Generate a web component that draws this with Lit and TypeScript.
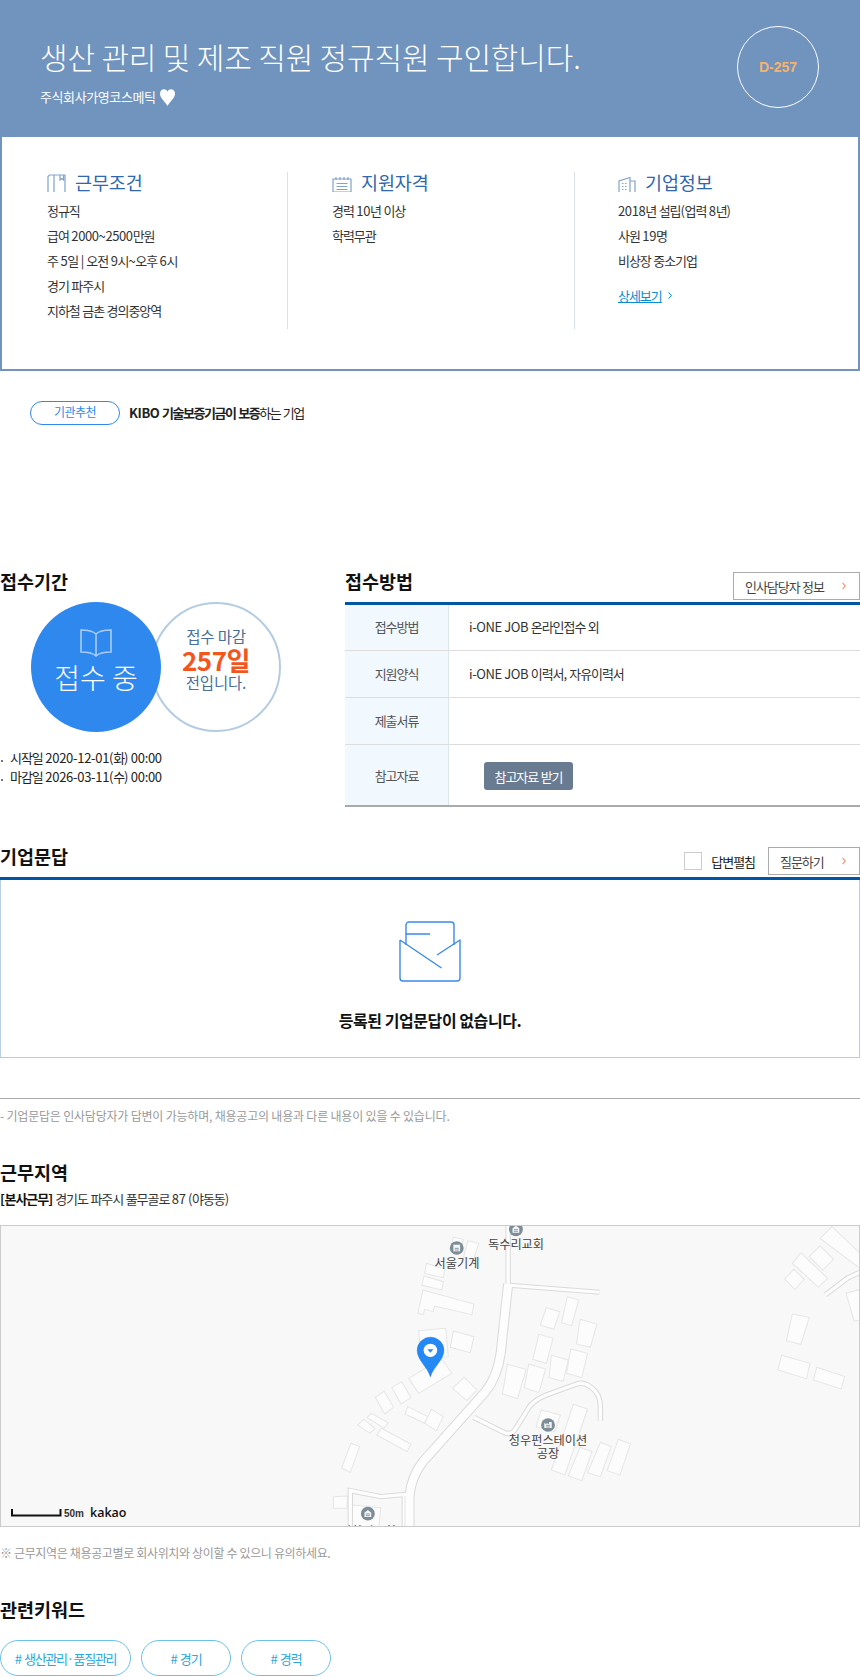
import { LitElement, html, css, svg } from "lit";
import { customElement } from "lit/decorators.js";

const chev = html`<svg class="chev" width="4" height="8" viewBox="0 0 4 8"><path d="M.5.8l2.8 3.2L.5 7.200" fill="none" stroke="#f0662f" stroke-width="1"/></svg>`;

/* Hangul runs are set tighter than digits and Latin, as in the reference face */
const k = (text: string) =>
  html`<span>${text.split(/([\uAC00-\uD7A3]+)/).map((part, i) => (i % 2 ? html`<span class="h">${part}</span>` : part))}</span>`;

const buildings = [
  "1450,85 1485,50 1568,130 1568,175", "1368,160 1393,128 1472,205 1445,232", "1418,140 1450,108 1490,148 1458,180",
  "1345,207 1372,178 1403,208 1375,238", "1527,250 1568,238 1568,330 1550,333", "1368,312 1418,322 1393,403 1350,392",
  "1336,436 1420,460 1410,506 1325,480", "1440,472 1523,500 1512,537 1430,510",
  "640,293 680,305 662,358 622,345", "702,260 736,270 715,347 685,338", "740,328 790,342 770,412 729,402",
  "618,373 660,385 640,460 600,448", "712,417 762,430 745,503 700,490", "655,436 705,450 690,514 648,503",
  "588,462 638,477 618,548 575,533", "525,463 580,478 555,566 510,552", "720,583 762,597 695,795 655,780",
  "625,600 682,615 665,665 610,650", "740,712 775,725 745,812 705,797", "800,697 832,710 800,800 762,788", "853,688 889,702 858,795 820,782",
  "365,82 395,88 385,125 355,118", "408,92 440,100 425,150 395,142",
  "285,160 340,178 335,203 280,190", "278,198 336,215 330,240 272,226", "275,240 426,282 420,314 310,288 305,305 280,298 276,314 260,310",
  "262,362 342,355 350,440 270,450", "365,363 426,380 415,428 356,412", "233,505 330,445 360,490 262,550",
  "362,535 397,502 435,540 405,572", "183,532 212,515 240,563 210,582", "134,562 160,544 188,592 162,612",
  "230,590 290,620 280,640 222,612", "300,598 335,620 315,662 280,640", "110,622 122,610 172,638 160,655",
  "82,645 100,628 133,655 118,670", "152,655 240,703 228,725 138,675", "62,700 88,710 60,787 34,775", "10,860 52,858 50,895 10,895", "65,885 150,893 145,950 62,950",
];
const roads: [string, number][] = [
  ["M527 40L527 225", 10],
  ["M530 226L797 247", 9],
  ["M527 222L505 430Q495 500 460 545L275 755Q240 800 235 860L235 960", 24],
  ["M425 622L510 665Q535 680 550 655L590 590Q605 570 640 555L730 522Q750 515 770 530Q800 550 800 590L800 632", 10],
  ["M225 853L150 860L60 842L60 960", 10],
  ["M218 855L218 960", 6],
  ["M1465 255L1530 205L1575 183", 10],
];

function poi(cx: number, cy: number, kind: string) {
  return svg`<circle cx=${cx} cy=${cy} r="20.5" fill="#7c8d98"/>
    <path d=${kind === "church"
      ? `M${cx - 10} ${cy + 10}V${cy - 3}L${cx} ${cy - 11}L${cx + 10} ${cy - 3}V${cy + 10}Z`
      : kind === "factory"
        ? `M${cx - 11} ${cy + 9}V${cy - 6}L${cx - 4} ${cy - 2}V${cy - 6}L${cx + 3} ${cy - 2}V${cy - 9}H${cx + 11}V${cy + 9}Z`
        : `M${cx - 10} ${cy + 10}V${cy - 10}H${cx + 10}V${cy + 10}Z`}
      fill="#fff" opacity="0.92"/>
    <path d=${`M${cx - 6} ${cy + 1}H${cx + 6}M${cx - 6} ${cy + 6}H${cx + 6}`} stroke="#7c8d98" stroke-width="2.5" fill="none"/>`;
}

@customElement("app-root")
export class AppRoot extends LitElement {
  static styles = css`
    :host { display: block; width: 860px; height: 1677px; overflow: hidden; background: #fff; color: #222;
      font-family: "Noto Sans CJK KR", "Noto Sans", sans-serif; font-size: 13px; letter-spacing: -0.4px; }
    * { box-sizing: border-box; }
    .h { letter-spacing: var(--hs, -1.05px); }
    .head { height: 137px; background: #7094bd; color: #fff; display: flex; justify-content: space-between; padding: 26px 41px 0 40px; }
    .head h1 { margin: 9px 0 0; font-size: 30px; line-height: 42px; font-weight: 300; letter-spacing: -0.14px; }
    .corp { display: flex; align-items: center; gap: 3px; margin-top: 10px; line-height: 20px; letter-spacing: -0.4px; }
    .dday { width: 82px; height: 82px; border: 1px solid #fff; border-radius: 50%; display: flex; align-items: center; justify-content: center; color: #f6b26b; font: bold 14px "Liberation Sans", sans-serif; letter-spacing: 0; }
    .info { height: 234px; border: 2px solid #7094bd; border-top: 0; display: grid; grid-template-columns: 284.5px 287px 1fr; padding-top: 35px; align-items: start; }
    .col { height: 157px; padding-left: 44.5px; border-left: 1px solid #d7e1ec; }
    .col:first-child { border-left: 0; padding-left: 45px; }
    .col:last-child { padding-left: 43.5px; }
    .col h3 { margin: 0 0 6px; display: flex; align-items: flex-end; gap: 9px; height: 20px; font-size: 18.5px; line-height: 20px; font-weight: 400; color: #2f68ad; letter-spacing: -0.1px; }
    .col h3 svg { flex: none; }
    .col p { margin: 0; line-height: 25px; height: 25px; color: #333; }
    .col .more { margin-top: 10px; display: flex; align-items: center; gap: 6px; }
    .more a { color: #0a8ed1; text-decoration: underline; }
    .rec { margin: 30px 0 0 30px; display: flex; align-items: center; gap: 9px; height: 24px; --hs: -1.45px; }
    .rec > div:last-child { margin-top: -2px; }
    .pill { width: 90px; height: 24px; border: 1px solid #2f88ee; border-radius: 12px; color: #2f88ee; font-size: 12px; text-align: center; line-height: 20px; letter-spacing: -0.6px; }
    .rec b { font-weight: 700; }
    .apply { display: flex; margin-top: 147px; }
    .left { width: 345px; }
    .right { flex: 1; }
    h2 { margin: 0; font-size: 18.5px; line-height: 20px; font-weight: 700; color: #111; letter-spacing: 0; }
    .titlerow { height: 30px; display: flex; justify-content: space-between; align-items: flex-start; }
    .titlerow h2 { margin-top: -1px; }
    .btn { height: 28px; border: 1px solid #aaa; background: #fff; display: flex; align-items: center; justify-content: space-between; padding: 0 13px 0 11px; color: #444; }
    .b1 { width: 127px; } .b2 { width: 92px; }
    .tools { display: flex; align-items: center; gap: 13px; }
    .check { display: flex; align-items: center; gap: 9px; }
    .box18 { width: 18px; height: 18px; border: 1px solid #ccc; }
    .circles { display: flex; padding-left: 31px; }
    .c1 { position: relative; z-index: 1; width: 130px; height: 130px; border-radius: 50%; background: #2f88ee; color: #fff; display: flex; flex-direction: column; align-items: center; padding-top: 27px; }
    .c1 span { font-size: 28px; line-height: 36px; margin-top: 2px; letter-spacing: 0; font-weight: 300; }
    .c2 { width: 130px; height: 130px; margin-left: -10px; border-radius: 50%; border: 2px solid #b4cce2; display: flex; flex-direction: column; align-items: center; padding-top: 20px; color: #4a6f99; font-size: 15.5px; line-height: 23px; letter-spacing: -0.2px; }
    .c2 span:first-child { line-height: 24px; }
    .c2 b { font-size: 26px; line-height: 23px; color: #f2561d; letter-spacing: -0.5px; }
    ul { list-style: none; margin: 17px 0 0; padding: 0; letter-spacing: -0.3px; }
    li { line-height: 18.5px; padding-left: 10px; display: block; position: relative; }
    li::before { content: ""; position: absolute; left: 1px; top: 11px; width: 2px; height: 2px; background: #777; }
    .table { border-top: 3px solid #0055a5; border-bottom: 2px solid #aaa; display: grid; grid-template-columns: 104px 1fr; grid-template-rows: 46px 47px 47px 60px; }
    .th { background: #f1f8fe; border-right: 1px solid #dde5ec; border-bottom: 1px solid #ddd; display: flex; align-items: center; justify-content: center; color: #555; padding-bottom: 2px; }
    .td { border-bottom: 1px solid #ddd; display: flex; align-items: center; padding: 0 0 2px 20px; color: #333; }
    .last { border-bottom: 0; padding-bottom: 0; }
    .dl { margin: 2px 0 0 15px; width: 89px; height: 28px; background: #697b90; border-radius: 3px; color: #fff; display: flex; align-items: center; justify-content: center; }
    .qa { margin-top: 40px; }
    .empty { height: 181px; border-top: 3px solid #0055a5; }
    .empty > div { height: 178px; border: 1px solid #b9cde2; border-top: 0; display: flex; flex-direction: column; align-items: center; padding-top: 41px; }
    .empty svg { display: block; }
    .empty strong { margin-top: 26px; font-size: 16px; line-height: 24px; font-weight: 700; letter-spacing: -0.45px; color: #111; }
    .note { color: #999; font-size: 12px; line-height: 20px; letter-spacing: -0.2px; }
    .qn { margin-top: 40px; border-top: 1px solid #aaa; padding-top: 7px; }
    .loc { margin-top: 33px; line-height: 26px; }
    .addr { margin-top: 4px; line-height: 20px; color: #333; }
    .addr b { font-weight: 700; color: #111; }
    .map { position: relative; margin-top: 16px; height: 302px; border: 1px solid #ccc; background: #f8f8f8; overflow: hidden; }
    .map svg { position: absolute; left: 0; top: 0; display: block; }
    .mn { margin-top: 16px; letter-spacing: -0.35px; }
    .kw { margin-top: 33px; line-height: 26px; }
    .chips { margin-top: 18px; display: flex; gap: 10px; }
    .chip { height: 36px; width: 90px; border: 1px solid #6cc0ec; border-radius: 18px; color: #27a8e0; display: flex; align-items: center; justify-content: center; }
    .chip.wide { width: 131px; --hs: -1.3px; }
  `;

  private icon1 = html`<svg width="19" height="18" viewBox="0 0 19 18" fill="none" stroke="#7fa3cb" stroke-width="1.2"><path d="M1 18V2.500L2.500 1H18V18M7 18V1M13 1V6L14.800 4.500L16.500 6V1"/></svg>`;
  private icon2 = html`<svg width="20" height="16" viewBox="0 0 20 16" fill="none" stroke="#7fa3cb" stroke-width="1.2"><path d="M1 16V3H19V16M1 16H19M4 1V4M8 1V4M12 1V4M16 1V4M4.500 7.500H15.500M4.500 10.500H15.500M4.500 13.500H15.500"/></svg>`;
  private icon3 = html`<svg width="18" height="16" viewBox="0 0 18 16" fill="none" stroke="#7fa3cb" stroke-width="1.2"><path d="M1 16V5L12 1.500V16M12 5H17V16"/><path d="M4 7.500H9M4 10.500H9M4 13.500H9" stroke-dasharray="1.500 1.500"/></svg>`;

  render() {
    return html`
      <div class="head">
        <div>
          <h1>생산 관리 및 제조 직원 정규직원 구인합니다.</h1>
          <div class="corp">주식회사가영코스메틱
            <svg width="17" height="17" viewBox="0 0 17 17"><path d="M8.500 17C6.500 13 1 9.500 1 4.800C1 2 2.800 0.300 4.800 0.300C6.400 0.300 7.800 1.200 8.500 2.400C9.200 1.200 10.600 0.300 12.200 0.300C14.200 0.300 16 2 16 4.800C16 9.500 10.500 13 8.500 17Z" fill="#fff"/></svg>
          </div>
        </div>
        <div class="dday">D-257</div>
      </div>
      <div class="info">
        <div class="col">
          <h3>${this.icon1}근무조건</h3>
          <p>${k("정규직")}</p><p>${k("급여 2000~2500만원")}</p><p>${k("주 5일 | 오전 9시~오후 6시")}</p><p>${k("경기 파주시")}</p><p>${k("지하철 금촌 경의중앙역")}</p>
        </div>
        <div class="col">
          <h3>${this.icon2}지원자격</h3>
          <p>${k("경력 10년 이상")}</p><p>${k("학력무관")}</p>
        </div>
        <div class="col">
          <h3>${this.icon3}기업정보</h3>
          <p>${k("2018년 설립(업력 8년)")}</p><p>${k("사원 19명")}</p><p>${k("비상장 중소기업")}</p>
          <p class="more"><a>${k("상세보기")}</a><svg width="4" height="7" viewBox="0 0 4 7"><path d="M.5.5l3 3-3 3" fill="none" stroke="#0a8ed1"/></svg></p>
        </div>
      </div>
      <div class="rec"><div class="pill">기관추천</div><div><b>${k("KIBO 기술보증기금이 보증")}</b>${k("하는 기업")}</div></div>

      <div class="apply">
        <div class="left">
          <div class="titlerow"><h2>접수기간</h2></div>
          <div class="circles">
            <div class="c1">
              <svg width="32" height="28" viewBox="0 0 32 28" fill="none" stroke="#a9ccf7" stroke-width="1.6"><path d="M16 5C13 2 7 1 1 1V23C7 23 13 24 16 27C19 24 25 23 31 23V1C25 1 19 2 16 5V27"/></svg>
              <span>접수 중</span>
            </div>
            <div class="c2"><span>접수 마감</span><b>257일</b><span>전입니다.</span></div>
          </div>
          <ul><li>${k("시작일 2020-12-01(화) 00:00")}</li><li>${k("마감일 2026-03-11(수) 00:00")}</li></ul>
        </div>
        <div class="right">
          <div class="titlerow"><h2>접수방법</h2><div class="btn b1">${k("인사담당자 정보")}${chev}</div></div>
          <div class="table">
            <div class="th">${k("접수방법")}</div><div class="td">${k("i-ONE JOB 온라인접수 외")}</div>
            <div class="th">${k("지원양식")}</div><div class="td">${k("i-ONE JOB 이력서, 자유이력서")}</div>
            <div class="th">${k("제출서류")}</div><div class="td"></div>
            <div class="th last">${k("참고자료")}</div><div class="td last"><div class="dl">${k("참고자료 받기")}</div></div>
          </div>
        </div>
      </div>

      <div class="qa">
        <div class="titlerow"><h2>기업문답</h2>
          <div class="tools"><div class="check"><div class="box18"></div>${k("답변펼침")}</div><div class="btn b2">${k("질문하기")}${chev}</div></div>
        </div>
        <div class="empty"><div>
          <svg width="62" height="61" viewBox="0 0 62 61" fill="none" stroke="#3b8aea" stroke-width="1.4" stroke-linejoin="round">
            <path d="M7 24V4A3 3 0 0 1 10 1H52A3 3 0 0 1 55 4V24M7 13H31"/>
            <path d="M1 19V57A3 3 0 0 0 4 60H58A3 3 0 0 0 61 57V19L38 34M1 19L42.500 47"/>
          </svg>
          <strong>등록된 기업문답이 없습니다.</strong>
        </div></div>
      </div>

      <div class="note qn">- 기업문답은 인사담당자가 답변이 가능하며, 채용공고의 내용과 다른 내용이 있을 수 있습니다.</div>

      <h2 class="loc">근무지역</h2>
      <div class="addr"><b>${k("[본사근무]")}</b> ${k("경기도 파주시 풀무골로 87 (야동동)")}</div>
      <div class="map">
        <svg width="858" height="300" viewBox="1 1226 858 300">
          <g transform="translate(330,1210) scale(0.338,0.3333)">
            ${buildings.map((p) => svg`<polygon points=${p} fill="#fcfcfc" stroke="#e6e6e6" stroke-width="3"/>`)}
            ${roads.map(([d, w]) => svg`<path d=${d} fill="none" stroke="#dadada" stroke-width=${w + 6}/>`)}
            ${roads.map(([d, w]) => svg`<path d=${d} fill="none" stroke="#fdfdfd" stroke-width=${w}/>`)}
            ${poi(375, 114, "office")}${poi(550, 58, "church")}${poi(645, 645, "factory")}${poi(112, 911, "church")}
            <path d="M297 500C288 470 258 450 258 421A39.500 39.500 0 0 1 337 421C337 450 306 470 297 500Z" fill="#2488f5" stroke="#1f74d3" stroke-width="1.500"/>
            <circle cx="297" cy="421" r="20" fill="#fff"/>
            <path d="M288 418H306L297 428Z" fill="#2488f5"/>
          </g>
          <g font-size="12.200" fill="#444" text-anchor="middle" letter-spacing="0">
            <text x="457" y="1268">서울기계</text>
            <text x="516" y="1249">독수리교회</text>
            <text x="548" y="1445">청우펀스테이션</text>
            <text x="548" y="1458">공장</text>
            <text x="368" y="1536">평화의교회</text>
          </g>
          <path d="M12 1509V1515.500H60.500V1509" fill="none" stroke="#111" stroke-width="2"/>
          <text x="64" y="1517" font-size="10" font-weight="700" fill="#333" letter-spacing="0" font-family="Liberation Sans">50m</text>
          <text x="90" y="1517" font-size="12.500" font-weight="600" fill="#111" letter-spacing="0" font-family="Open Sans">kakao</text>
        </svg>
      </div>
      <div class="note mn">※ 근무지역은 채용공고별로 회사위치와 상이할 수 있으니 유의하세요.</div>
      <h2 class="kw">관련키워드</h2>
      <div class="chips"><div class="chip wide">${k("# 생산관리·품질관리")}</div><div class="chip">${k("# 경기")}</div><div class="chip">${k("# 경력")}</div></div>
    `;
  }
}
